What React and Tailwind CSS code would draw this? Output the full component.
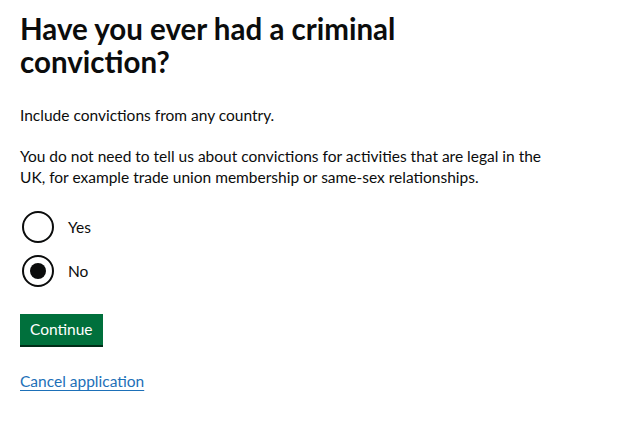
import { useState } from "react";

const font = { fontFamily: '"Lato", "Liberation Sans", Arial, sans-serif' };

function Radio({ label, checked, onChange }) {
  return (
    <label className="flex h-[33px] cursor-pointer items-center">
      <span className="ml-[2px] flex h-8 w-8 items-center justify-center rounded-full border-2 border-[#0b0c0c] bg-white">
        {checked && <span className="h-4 w-4 rounded-full bg-[#0b0c0c]" />}
      </span>
      <input type="radio" className="sr-only" checked={checked} onChange={onChange} />
      <span className="ml-[14px] text-[15.5px] leading-5 text-[#0b0c0c]">{label}</span>
    </label>
  );
}

export default function App() {
  const [answer, setAnswer] = useState("no");

  return (
    <div className="min-h-[425px] bg-white px-5 pt-3 text-[#0b0c0c]" style={font}>
      <h1 className="w-[420px] text-[29.5px] font-bold leading-[33px]">
        Have you ever had a criminal conviction?
      </h1>

      <p className="mt-[27px] text-[15.5px] leading-5">Include convictions from any country.</p>

      <p className="mt-[21px] w-[548px] text-[15.5px] leading-[21px]">
        You do not need to tell us about convictions for activities that are legal in the UK, for
        example trade union membership or same-sex relationships.
      </p>

      <div className="mt-[22px] flex flex-col gap-[11px]">
        <Radio label="Yes" checked={answer === "yes"} onChange={() => setAnswer("yes")} />
        <Radio label="No" checked={answer === "no"} onChange={() => setAnswer("no")} />
      </div>

      <button className="mt-[27px] block h-[31px] bg-[#00703c] px-[10px] text-[15.5px] leading-none text-white shadow-[0_2px_0_#002d18]">
        Continue
      </button>

      <a href="#" className="mt-[26px] inline-block text-[15.5px] leading-5 text-[#1d70b8] underline underline-offset-[3px]">
        Cancel application
      </a>
    </div>
  );
}
